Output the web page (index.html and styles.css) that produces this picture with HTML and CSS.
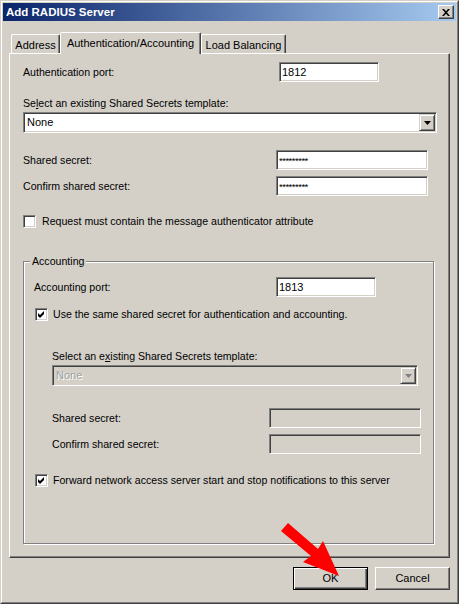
FILE: index.html
```html
<!DOCTYPE html>
<html>
<head>
<meta charset="utf-8">
<link rel="stylesheet" href="styles.css">
</head>
<body>
<div class="window">
  <div class="window-inner">
    <div class="titlebar">
      <span class="title">Add RADIUS Server</span>
      <span class="close"><svg width="8" height="7" viewBox="0 0 8 7"><path d="M0 0h2l2 2.3L6 0h2L5 3.5 8 7H6L4 4.7 2 7H0l3-3.5z" fill="#000"/></svg></span>
    </div>
    <div class="content">
      <div class="tabs">
        <div class="tab tab-address">Address</div>
        <div class="tab tab-active">Authentication/Accounting</div>
        <div class="tab tab-lb">Load Balancing</div>
      </div>
      <div class="panel">
        <div class="row">
          <span class="lbl w256">Authentication port:</span>
          <div class="edit w100">1812</div>
        </div>
        <div class="lbl lbl-tpl">Se<u>l</u>ect an existing Shared Secrets template:</div>
        <div class="combo w414">
          <span class="combo-text">None</span>
          <span class="dd"><svg width="7" height="4" viewBox="0 0 7 4"><path d="M0 0h7L3.5 4z" fill="#000"/></svg></span>
        </div>
        <div class="row row-secret">
          <span class="lbl w253">Shared secret:</span>
          <div class="edit w152 pw">*********</div>
        </div>
        <div class="row row-confirm">
          <span class="lbl w253">Confirm shared secret:</span>
          <div class="edit w152 pw">*********</div>
        </div>
        <div class="check-row row-req">
          <span class="cb"></span>
          <span class="lbl">Request must contain the message authenticator attribute</span>
        </div>
        <fieldset class="group">
          <legend class="group-legend">Accounting</legend>
          <div class="group-body">
            <div class="row">
              <span class="lbl w242">Accounting port:</span>
              <div class="edit w100">1813</div>
            </div>
            <div class="check-row row-same">
              <span class="cb"><svg width="7" height="7" viewBox="0 0 7 7"><path d="M0 2L2 4L6 0V3L2 7L0 5z" fill="#000"/></svg></span>
              <span class="lbl">Use the same shared secret for authentication and accounting.</span>
            </div>
            <div class="indent">
              <div class="lbl lbl-tpl2">Select an e<u>x</u>isting Shared Secrets template:</div>
              <div class="combo w366 disabled">
                <span class="combo-text">None</span>
                <span class="dd"><svg width="7" height="4" viewBox="0 0 7 4"><path d="M0 0h7L3.5 4z" fill="#808080"/></svg></span>
              </div>
              <div class="row row-gsecret">
                <span class="lbl w217">Shared secret:</span>
                <div class="edit w152 disabled"></div>
              </div>
              <div class="row row-gconfirm">
                <span class="lbl w217">Confirm shared secret:</span>
                <div class="edit w152 disabled"></div>
              </div>
            </div>
            <div class="check-row row-fwd">
              <span class="cb"><svg width="7" height="7" viewBox="0 0 7 7"><path d="M0 2L2 4L6 0V3L2 7L0 5z" fill="#000"/></svg></span>
              <span class="lbl">Forward network access server start and stop notifications to this server</span>
            </div>
          </div>
        </fieldset>
      </div>
      <div class="buttons">
        <button class="btn btn-default">OK</button>
        <button class="btn">Cancel</button>
      </div>
    </div>
  </div>
  <svg class="arrow" width="70" height="60" viewBox="275 520 70 60">
    <polygon points="280,530 287,522 317,548 322,540 338,575 302,561 310,555" fill="#ff0000"/>
  </svg>
</div>
</body>
</html>
```

FILE: styles.css
```css
* { box-sizing: border-box; }

body {
  margin: 0;
  background: #d4d0c8;
  font: 10.6px/13px "Liberation Sans", Arial, sans-serif;
  color: #000;
}

.window {
  position: relative;
  width: 459px;
  height: 604px;
  border: 1px solid;
  border-color: #d4d0c8 #404040 #404040 #d4d0c8;
}

.window-inner {
  height: 100%;
  border: 1px solid;
  border-color: #fff #808080 #808080 #fff;
  padding: 1px;
  display: flex;
  flex-direction: column;
}

.titlebar {
  height: 18px;
  background: linear-gradient(to right, #0a246a, #a6caf0);
  display: flex;
  align-items: center;
  justify-content: space-between;
  padding: 0 2px 0 3px;
}

.title {
  color: #fff;
  font-weight: bold;
  font-size: 11.5px;
}

.close {
  width: 16px;
  height: 14px;
  background: #d4d0c8;
  border: 1px solid;
  border-color: #fff #404040 #404040 #fff;
  box-shadow: inset -1px -1px #808080;
  display: flex;
  align-items: center;
  justify-content: center;
}

.content {
  flex: 1;
  padding: 11px 6px 0 6px;
  display: flex;
  flex-direction: column;
}

.tabs {
  display: flex;
  align-items: flex-end;
  height: 21px;
  padding-left: 2px;
}

.tab {
  height: 19px;
  font-size: 11px;
  border: 1px solid;
  border-bottom: none;
  border-color: #fff #404040 transparent #fff;
  box-shadow: inset -1px 0 #808080;
  border-radius: 2px 2px 0 0;
  display: flex;
  align-items: center;
  justify-content: center;
  padding-top: 2px;
  white-space: nowrap;
}

.tab-address { width: 49px; }
.tab-lb { width: 85px; }

.tab-active {
  width: 141px;
  height: 22px;
  margin-bottom: -1px;
  padding-top: 0;
  background: #d4d0c8;
  position: relative;
  z-index: 1;
}

.panel {
  border: 1px solid;
  border-color: #fff #404040 #404040 #fff;
  box-shadow: inset -1px -1px #808080;
  padding: 8px 0 13px 13px;
}

.row {
  display: flex;
  align-items: center;
  height: 20px;
}

.lbl { white-space: nowrap; }

.w256 { width: 256px; }
.w253 { width: 253px; }
.w242 { width: 242px; }
.w217 { width: 217px; }
.w100 { width: 100px; }
.w152 { width: 152px; }
.w414 { width: 414px; }
.w366 { width: 366px; }

.edit {
  height: 20px;
  background: #fff;
  border: 1px solid;
  border-color: #808080 #fff #fff #808080;
  box-shadow: inset 1px 1px #404040, inset -1px -1px #d4d0c8;
  padding: 0 2px;
  display: flex;
  align-items: center;
  font-size: 11px;
}

.edit.pw {
  align-items: flex-start;
  padding-top: 3px;
  font-size: 9.5px;
  letter-spacing: -0.5px;
}

.edit.disabled { background: #d4d0c8; }

.lbl-tpl { margin-top: 15px; }

.combo {
  height: 21px;
  margin-top: 2px;
  background: #fff;
  border: 1px solid;
  border-color: #808080 #fff #fff #808080;
  box-shadow: inset 1px 1px #404040, inset -1px -1px #d4d0c8;
  padding: 1px;
  display: flex;
  font-size: 11px;
}

.combo-text {
  flex: 1;
  padding-left: 2px;
  display: flex;
  align-items: center;
}

.combo.disabled { background: #d4d0c8; }
.combo.disabled .combo-text { color: #a0a0a0; text-shadow: 1px 1px #fff; }

.dd {
  width: 16px;
  height: 17px;
  background: #d4d0c8;
  border: 1px solid;
  border-color: #d4d0c8 #404040 #404040 #d4d0c8;
  box-shadow: inset 1px 1px #fff, inset -1px -1px #808080;
  display: flex;
  align-items: center;
  justify-content: center;
}

.row-secret { margin-top: 17px; }
.row-confirm { margin-top: 6px; }

.check-row {
  display: flex;
  align-items: center;
  height: 13px;
  gap: 6px;
}

.row-req { margin-top: 19px; }

.cb {
  width: 13px;
  height: 13px;
  background: #fff;
  border: 1px solid;
  border-color: #808080 #fff #fff #808080;
  box-shadow: inset 1px 1px #404040, inset -1px -1px #d4d0c8;
  display: flex;
  align-items: center;
  justify-content: center;
}

.group {
  margin: 27px 0 0 0;
  padding: 0;
  width: 411px;
  min-width: 0;
  border: 1px solid #808080;
  box-shadow: inset 1px 1px #fff, 1px 1px #fff;
}

.group-legend {
  margin-left: 6px;
  padding: 0 2px;
  background: #d4d0c8;
  line-height: 13px;
}

.group-body {
  padding: 9px 0 56px 10px;
}

.row-same { margin-top: 11px; margin-left: 1px; gap: 5px; }
.row-fwd { margin-top: 20px; margin-left: 1px; gap: 5px; }

.indent { padding-left: 18px; }

.lbl-tpl2 { margin-top: 29px; }

.row-gsecret { margin-top: 22px; }
.row-gconfirm { margin-top: 6px; }

.buttons {
  display: flex;
  justify-content: flex-end;
  gap: 7px;
  margin-top: 9px;
}

.btn {
  width: 75px;
  height: 23px;
  padding: 0;
  font: inherit;
  font-size: 11px;
  color: #000;
  background: #d4d0c8;
  border: 1px solid;
  border-color: #fff #404040 #404040 #fff;
  box-shadow: inset -1px -1px #808080;
}

.btn-default {
  border-color: #000;
  box-shadow: inset 1px 1px #fff, inset -1px -1px #404040, inset -2px -2px #808080;
}

.arrow {
  position: absolute;
  left: 275px;
  top: 520px;
  pointer-events: none;
}
```
